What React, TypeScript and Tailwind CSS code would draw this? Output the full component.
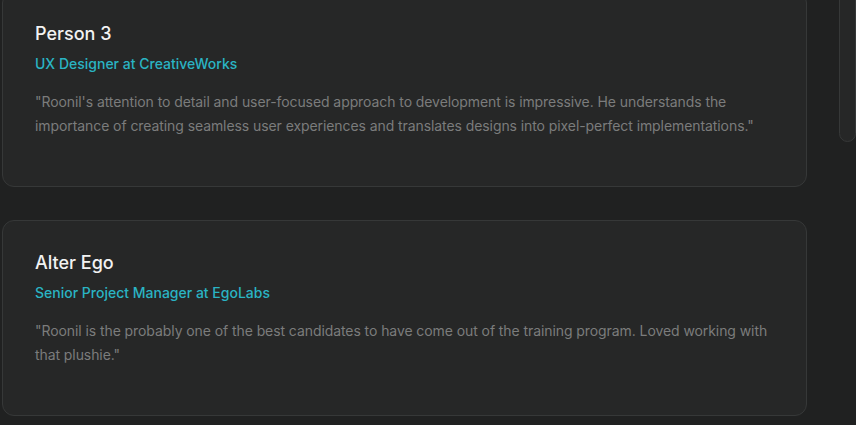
import React from "react";

const items = [
  {
    name: "Person 3",
    role: "UX Designer at CreativeWorks",
    quote:
      "\"Roonil's attention to detail and user-focused approach to development is impressive. He understands the importance of creating seamless user experiences and translates designs into pixel-perfect implementations.\"",
  },
  {
    name: "Alter Ego",
    role: "Senior Project Manager at EgoLabs",
    quote:
      "\"Roonil is the probably one of the best candidates to have come out of the training program. Loved working with that plushie.\"",
  },
];

export default function App() {
  return (
    <div
      className="min-h-screen w-full overflow-hidden bg-[#202121] pl-[2px]"
      style={{ fontFamily: "Inter, 'Liberation Sans', sans-serif" }}
    >
      <div className="-mt-[9px] grid grid-cols-[805px_1fr] gap-x-8">
        <div className="flex flex-col gap-[33px]">
          {items.map((it) => (
            <div
              key={it.name}
              className="rounded-xl border border-[#363838] bg-[#262727] px-8 pt-[28px] pb-[48px]"
            >
              <h3 className="text-[18px] font-medium leading-[28px] text-[#f2f2f2]">
                {it.name}
              </h3>
              <p className="mt-[6px] text-sm font-medium leading-5 text-[#2ab4c3]">
                {it.role}
              </p>
              <p className="mt-[16px] text-[14px] leading-6 tracking-[-0.08px] text-[#7b7c7c]">
                {it.quote}
              </p>
            </div>
          ))}
        </div>
        <div>
          <div className="h-[151px] rounded-xl border border-[#363838] bg-[#262727]" />
        </div>
      </div>
    </div>
  );
}
